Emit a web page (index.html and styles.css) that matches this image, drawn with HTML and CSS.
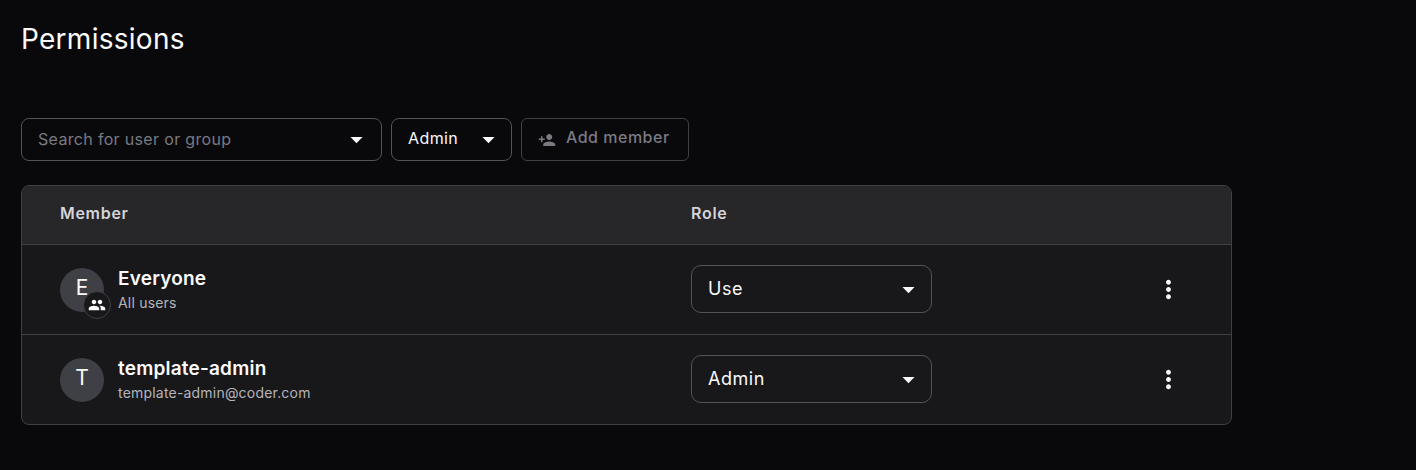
FILE: index.html
```html
<!DOCTYPE html>
<html lang="en">
<head>
<meta charset="utf-8">
<title>Permissions</title>
<link rel="stylesheet" href="styles.css">
</head>
<body>
<main class="page">
  <h1 class="title">Permissions</h1>
  <div class="toolbar">
    <div class="field field-search">
      <span class="placeholder">Search for user or group</span>
      <svg class="caret" viewBox="0 0 24 24"><path d="M7 10l5 5 5-5z"/></svg>
    </div>
    <div class="field field-role">
      <span class="field-value">Admin</span>
      <svg class="caret" viewBox="0 0 24 24"><path d="M7 10l5 5 5-5z"/></svg>
    </div>
    <button class="add-button" type="button">
      <svg class="add-icon" viewBox="0 0 24 24"><path d="M15 12c2.21 0 4-1.79 4-4s-1.79-4-4-4-4 1.79-4 4 1.79 4 4 4zm-9-2V7H4v3H1v2h3v3h2v-3h3v-2H6zm9 4c-2.67 0-8 1.34-8 4v2h16v-2c0-2.66-5.33-4-8-4z"/></svg>
      <span class="add-label">Add member</span>
    </button>
  </div>
  <section class="table">
    <div class="row row-head">
      <div class="col-member head-cell">Member</div>
      <div class="col-role head-cell">Role</div>
    </div>
    <div class="row row-body">
      <div class="col-member member">
        <div class="avatar-wrap">
          <div class="avatar">E</div>
          <div class="badge">
            <svg class="badge-icon" viewBox="0 0 24 24"><path d="M16 11c1.66 0 2.99-1.34 2.99-3S17.66 5 16 5c-1.66 0-3 1.34-3 3s1.34 3 3 3zm-8 0c1.66 0 2.99-1.34 2.99-3S9.66 5 8 5C6.34 5 5 6.34 5 8s1.34 3 3 3zm0 2c-2.33 0-7 1.17-7 3.5V19h14v-2.5c0-2.33-4.67-3.5-7-3.5zm8 0c-.29 0-.62.02-.97.05 1.16.84 1.97 1.97 1.97 3.45V19h6v-2.5c0-2.33-4.67-3.5-7-3.5z"/></svg>
          </div>
        </div>
        <div class="identity">
          <div class="name">Everyone</div>
          <div class="sub">All users</div>
        </div>
      </div>
      <div class="col-role">
        <div class="role-select"><span class="role-value">Use</span><svg class="caret" viewBox="0 0 24 24"><path d="M7 10l5 5 5-5z"/></svg></div>
      </div>
      <svg class="more" viewBox="0 0 24 24"><path d="M12 8c1.1 0 2-.9 2-2s-.9-2-2-2-2 .9-2 2 .9 2 2 2zm0 2c-1.1 0-2 .9-2 2s.9 2 2 2 2-.9 2-2-.9-2-2-2zm0 6c-1.1 0-2 .9-2 2s.9 2 2 2 2-.9 2-2-.9-2-2-2z"/></svg>
    </div>
    <div class="row row-body">
      <div class="col-member member">
        <div class="avatar-wrap">
          <div class="avatar">T</div>
        </div>
        <div class="identity">
          <div class="name">template-admin</div>
          <div class="sub">template-admin@coder.com</div>
        </div>
      </div>
      <div class="col-role">
        <div class="role-select"><span class="role-value">Admin</span><svg class="caret" viewBox="0 0 24 24"><path d="M7 10l5 5 5-5z"/></svg></div>
      </div>
      <svg class="more" viewBox="0 0 24 24"><path d="M12 8c1.1 0 2-.9 2-2s-.9-2-2-2-2 .9-2 2 .9 2 2 2zm0 2c-1.1 0-2 .9-2 2s.9 2 2 2 2-.9 2-2-.9-2-2-2zm0 6c-1.1 0-2 .9-2 2s.9 2 2 2 2-.9 2-2-.9-2-2-2z"/></svg>
    </div>
  </section>
</main>
</body>
</html>
```
FILE: styles.css
```css
* { box-sizing: border-box; }
html, body { margin: 0; height: 100%; }
body {
  background: #09090b;
  color: #fafafa;
  font-family: Inter, "Liberation Sans", sans-serif;
  font-optical-sizing: none;
  overflow: hidden;
}
.page { width: 1232px; padding: 22px 0 0 21px; }
.title {
  margin: 0;
  font-size: 28px;
  font-weight: 400;
  line-height: 34px;
  letter-spacing: 0.27px;
  height: 96px;
  color: #fafafa;
}
.toolbar { display: flex; gap: 9px; height: 43px; margin-bottom: 24px; }
.field {
  display: flex;
  align-items: center;
  justify-content: space-between;
  border: 1px solid #52525b;
  border-radius: 8px;
  height: 43px;
  padding: 0 8px 0 16px;
}
.field-search { width: 361px; padding-right: 10px; }
.field-role { width: 121px; padding-right: 8px; }
.placeholder { font-size: 16px; color: #7a7a83; letter-spacing: 0.33px; margin-top: -1px; }
.field-value { font-size: 16px; color: #fafafa; letter-spacing: 0.4px; margin-top: -3px; }
.caret { width: 29px; height: 29px; fill: #fafafa; flex: none; }
.add-button {
  display: flex;
  align-items: center;
  width: 168px;
  height: 43px;
  padding: 0 0 0 16px;
  border: 1px solid #3f3f46;
  border-radius: 6px;
  background: transparent;
  font-family: inherit;
  color: #7a7a83;
}
.add-icon { width: 18px; height: 18px; fill: #7a7a83; margin-right: 10px; flex: none; }
.add-label { font-size: 16px; font-weight: 500; letter-spacing: 0.5px; margin-top: -5px; }
.table {
  width: 1211px;
  border: 1px solid #3f3f46;
  border-radius: 8px;
  background: #18181b;
  overflow: hidden;
}
.row { display: flex; align-items: center; position: relative; }
.row-head {
  height: 58px;
  background: #27272a;
  padding-bottom: 4px;
}
.row-body { height: 90px; border-top: 1px solid #3f3f46; }
.col-member { width: 669px; padding-left: 38px; flex: none; }
.col-role { flex: 1; }
.head-cell { font-size: 16px; font-weight: 600; color: #d4d4d8; line-height: 20px; letter-spacing: 0.7px; }
.member { display: flex; align-items: center; gap: 14px; }
.avatar-wrap { position: relative; width: 44px; height: 44px; flex: none; }
.avatar {
  width: 44px;
  height: 44px;
  padding-bottom: 5px;
  border-radius: 50%;
  background: #3f3f46;
  color: #fafafa;
  font-size: 21px;
  display: flex;
  align-items: center;
  justify-content: center;
}
.badge {
  position: absolute;
  right: -7px;
  bottom: -7px;
  width: 28px;
  height: 28px;
  border-radius: 50%;
  border: 1px solid #3f3f46;
  background: #18181b;
  display: flex;
  align-items: center;
  justify-content: center;
}
.badge-icon { width: 18px; height: 18px; fill: #fafafa; }
.name { font-size: 19px; font-weight: 600; line-height: 24px; color: #fafafa; letter-spacing: 0.2px; }
.sub { font-size: 14px; line-height: 20px; color: #b4b4bb; margin-top: 2px; letter-spacing: 0.2px; }
.role-select {
  display: flex;
  align-items: center;
  justify-content: space-between;
  width: 241px;
  height: 48px;
  margin-bottom: 1px;
  border: 1px solid #52525b;
  border-radius: 10px;
  padding: 0 8px 0 16px;
  font-size: 18px;
  letter-spacing: 0.55px;
  color: #fafafa;
}
.role-value { margin-top: -2px; }
.more { position: absolute; left: 1132px; top: 30px; width: 29px; height: 29px; fill: #fafafa; }
```
